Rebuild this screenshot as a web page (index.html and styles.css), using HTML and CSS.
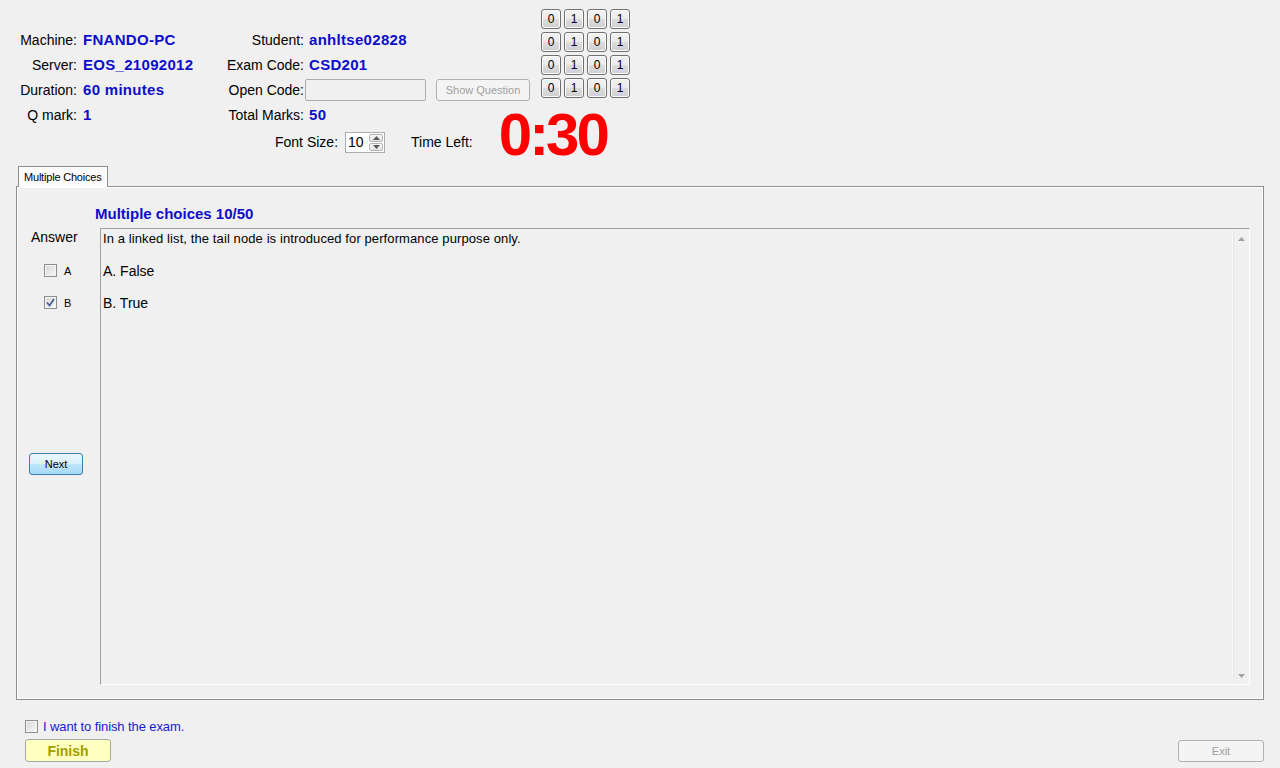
FILE: index.html
```html
<!DOCTYPE html>
<html>
<head>
<meta charset="utf-8">
<title>Exam</title>
<link rel="stylesheet" href="styles.css">
</head>
<body>
<div class="header">
  <div class="info">
    <span class="lbl">Machine:</span><span class="val">FNANDO-PC</span><span class="lbl lbl2">Student:</span><span class="val val2">anhltse02828</span><span></span>
    <span class="lbl">Server:</span><span class="val">EOS_21092012</span><span class="lbl lbl2">Exam Code:</span><span class="val val2">CSD201</span><span></span>
    <span class="lbl">Duration:</span><span class="val">60 minutes</span><span class="lbl lbl2">Open Code:</span><span class="cell"><span class="textbox"></span></span><span class="cell"><span class="btn btn-disabled btn-sq">Show Question</span></span>
    <span class="lbl">Q mark:</span><span class="val">1</span><span class="lbl lbl2">Total Marks:</span><span class="val val2">50</span><span></span>
  </div>
  <div class="bits">
    <span class="bit">0</span><span class="bit">1</span><span class="bit">0</span><span class="bit">1</span>
    <span class="bit">0</span><span class="bit">1</span><span class="bit">0</span><span class="bit">1</span>
    <span class="bit">0</span><span class="bit">1</span><span class="bit">0</span><span class="bit">1</span>
    <span class="bit">0</span><span class="bit">1</span><span class="bit">0</span><span class="bit">1</span>
  </div>
</div>

<div class="fontrow">
  <span class="flbl">Font Size:</span>
  <span class="spin">
    <span class="spin-val">10</span>
    <span class="spin-btns">
      <span class="spin-b"><svg width="7" height="4" viewBox="0 0 7 4"><path d="M0 4 L3.5 0 L7 4 Z" fill="#5a5a5a"/></svg></span>
      <span class="spin-b"><svg width="7" height="4" viewBox="0 0 7 4"><path d="M0 0 L3.5 4 L7 0 Z" fill="#5a5a5a"/></svg></span>
    </span>
  </span>
  <span class="tlbl">Time Left:</span>
  <span class="timer">0:30</span>
</div>

<div class="tabs">
  <div class="tabstrip"><span class="tab">Multiple Choices</span></div>
  <div class="panel">
    <div class="qtitle">Multiple choices 10/50</div>
    <div class="qrow">
      <div class="answers">
        <div class="anslbl">Answer</div>
        <div class="opt"><span class="cb"></span><span class="optl">A</span></div>
        <div class="opt"><span class="cb"><svg width="11" height="11" viewBox="0 0 11 11"><path d="M2 5.5 L4.5 8.5 L9 2" fill="none" stroke="#4a5f97" stroke-width="1.8"/></svg></span><span class="optl">B</span></div>
        <span class="btn btn-next">Next</span>
      </div>
      <div class="qbox">
        <div class="qtext">
          <p class="qline">In a linked list, the tail node is introduced for performance purpose only.</p>
          <p class="aline">A. False</p>
          <p class="aline">B. True</p>
        </div>
        <div class="vscroll">
          <svg width="7" height="4" viewBox="0 0 7 4"><path d="M0 4 L3.5 0 L7 4 Z" fill="#a3a3a3"/></svg>
          <svg width="7" height="4" viewBox="0 0 7 4"><path d="M0 0 L3.5 4 L7 0 Z" fill="#a3a3a3"/></svg>
        </div>
      </div>
    </div>
  </div>
</div>

<div class="footer">
  <div class="finish-row"><span class="cb"></span><span class="finish-lbl">I want to finish the exam.</span></div>
  <div class="btn-row">
    <span class="btn btn-finish">Finish</span>
    <span class="btn btn-disabled btn-exit">Exit</span>
  </div>
</div>
</body>
</html>
```

FILE: styles.css
```css
* { box-sizing: border-box; }
html, body {
  margin: 0;
  padding: 0;
  background: #f0f0f0;
  width: 1280px;
  height: 768px;
  overflow: hidden;
  font-family: "Liberation Sans", Arial, sans-serif;
  color: #000;
}

.header {
  display: flex;
  align-items: flex-start;
  padding-top: 9px;
  height: 128px;
}

.info {
  margin-top: 18px;
  display: grid;
  grid-template-columns: 83px 130px 92px 131px 94px;
  grid-auto-rows: 25px;
  align-items: center;
}
.lbl {
  font-size: 14px;
  text-align: right;
  padding-right: 6px;
  white-space: nowrap;
}
.lbl2 { padding-right: 1px; }
.val {
  font-size: 15px;
  letter-spacing: 0.3px;
  font-weight: bold;
  color: #0d0dcc;
  white-space: nowrap;
}
.val2 { padding-left: 4px; }
.cell { display: flex; align-items: center; }
.textbox {
  display: block;
  width: 121px;
  height: 22px;
  background: #f0f0f0;
  border: 1px solid #abadb3;
  border-radius: 2px;
}

.btn {
  display: inline-flex;
  align-items: center;
  justify-content: center;
  font-size: 11px;
  border-radius: 3px;
  white-space: nowrap;
}
.btn-disabled {
  color: #a0a0a0;
  border: 1px solid #adb2b5;
  background: #f4f4f4;
}
.btn-sq { width: 94px; height: 22px; }

.bits {
  margin-left: 11px;
  display: grid;
  grid-template-columns: repeat(4, 20px);
  grid-auto-rows: 20px;
  gap: 3px;
}
.bit {
  display: flex;
  align-items: center;
  justify-content: center;
  font-size: 12px;
  border: 1px solid #707070;
  border-radius: 3px;
  background: linear-gradient(#f2f2f2 0%, #ebebeb 50%, #dddddd 51%, #cfcfcf 100%);
  box-shadow: inset 0 0 0 1px #fbfbfb;
}

.fontrow {
  display: flex;
  align-items: center;
  height: 28px;
  padding-left: 275px;
}
.flbl, .tlbl { font-size: 14px; white-space: nowrap; }
.spin {
  display: flex;
  margin-left: 7px;
  width: 40px;
  height: 21px;
  border: 1px solid #abadb3;
  background: #fff;
}
.spin-val {
  flex: 1;
  font-size: 14px;
  padding-left: 2px;
  line-height: 19px;
}
.spin-btns {
  display: flex;
  flex-direction: column;
  width: 15px;
  padding: 1px 1px 1px 0;
  gap: 1px;
}
.spin-b {
  flex: 1;
  display: flex;
  align-items: center;
  justify-content: center;
  border: 1px solid #b5b5b5;
  border-radius: 2px;
  background: linear-gradient(#f7f7f7, #e3e3e3);
}
.tlbl { margin-left: 26px; }
.timer {
  margin-left: 26px;
  margin-bottom: 14px;
  font-size: 60px;
  line-height: 1;
  font-weight: bold;
  color: #ff0000;
  letter-spacing: -3px;
}

.tabs {
  margin-top: 10px;
  padding: 0 16px 0 16px;
}
.tabstrip { display: flex; padding-left: 2px; height: 20px; }
.tab {
  position: relative;
  z-index: 1;
  display: flex;
  align-items: center;
  height: 21px;
  padding: 0 5px;
  font-size: 11px;
  letter-spacing: -0.2px;
  background: #fcfcfc;
  border: 1px solid #8c8e94;
  border-bottom: none;
}
.panel {
  height: 514px;
  border: 1px solid #8c8e94;
  box-shadow: inset 1px 1px 0 #fff, inset -1px -1px 0 #fff;
  background: #f0f0f0;
  padding-top: 19px;
}
.qtitle {
  margin-left: 78px;
  font-size: 15px;
  font-weight: bold;
  color: #0d0dcc;
  line-height: 16px;
}
.qrow {
  display: flex;
  margin-top: 6px;
  height: 457px;
}
.answers {
  width: 83px;
  display: flex;
  flex-direction: column;
  padding-left: 12px;
}
.anslbl { font-size: 14px; line-height: 16px; margin-top: 1px; margin-left: 2px; }
.opt {
  display: flex;
  align-items: center;
  height: 13px;
  margin-left: 15px;
  margin-top: 19px;
}
.opt + .opt { margin-top: 19px; }
.cb {
  display: inline-flex;
  align-items: center;
  justify-content: center;
  width: 13px;
  height: 13px;
  border: 1px solid #8e8f8f;
  background: linear-gradient(135deg, #d8d8d8, #f7f7f7);
  box-shadow: inset 0 0 0 1px #f4f4f4;
}
.optl { font-size: 11px; margin-left: 7px; }
.btn-next {
  margin-top: 144px;
  width: 54px;
  height: 22px;
  border: 1px solid #3c7fb1;
  background: linear-gradient(#eaf6fd 0%, #d9f0fc 50%, #bee6fd 51%, #a7d9f5 100%);
  font-size: 11px;
}

.qbox {
  flex: 1;
  margin-right: 13px;
  display: flex;
  border-top: 1px solid #a0a0a0;
  border-left: 1px solid #a0a0a0;
  border-bottom: 1px solid #fff;
  border-right: 1px solid #fff;
}
.qtext { flex: 1; padding-left: 2px; }
.qtext p { margin: 0; }
.qline { font-size: 13px; letter-spacing: 0.1px; line-height: 16px; margin-top: 2px !important; }
.aline { font-size: 14px; line-height: 16px; margin-top: 16px !important; }
.vscroll {
  width: 17px;
  display: flex;
  flex-direction: column;
  justify-content: space-between;
  align-items: center;
  padding: 8px 0 6px;
  border-left: 1px solid #f8f8f8;
  box-shadow: inset 1px 0 0 #e6e6e6;
}

.footer { padding: 0 16px 0 25px; }
.finish-row {
  display: flex;
  align-items: center;
  margin-top: 19px;
  height: 15px;
}
.finish-lbl {
  margin-left: 5px;
  font-size: 13px;
  letter-spacing: -0.1px;
  color: #1a1ad0;
}
.btn-row {
  display: flex;
  justify-content: space-between;
  align-items: flex-start;
  margin-top: 5px;
}
.btn-finish {
  width: 86px;
  height: 23px;
  border: 1px solid #a9a9a9;
  background: #ffffc0;
  color: #a0a000;
  font-weight: bold;
  font-size: 14px;
}
.btn-exit { width: 86px; height: 22px; margin-top: 1px; }
```
